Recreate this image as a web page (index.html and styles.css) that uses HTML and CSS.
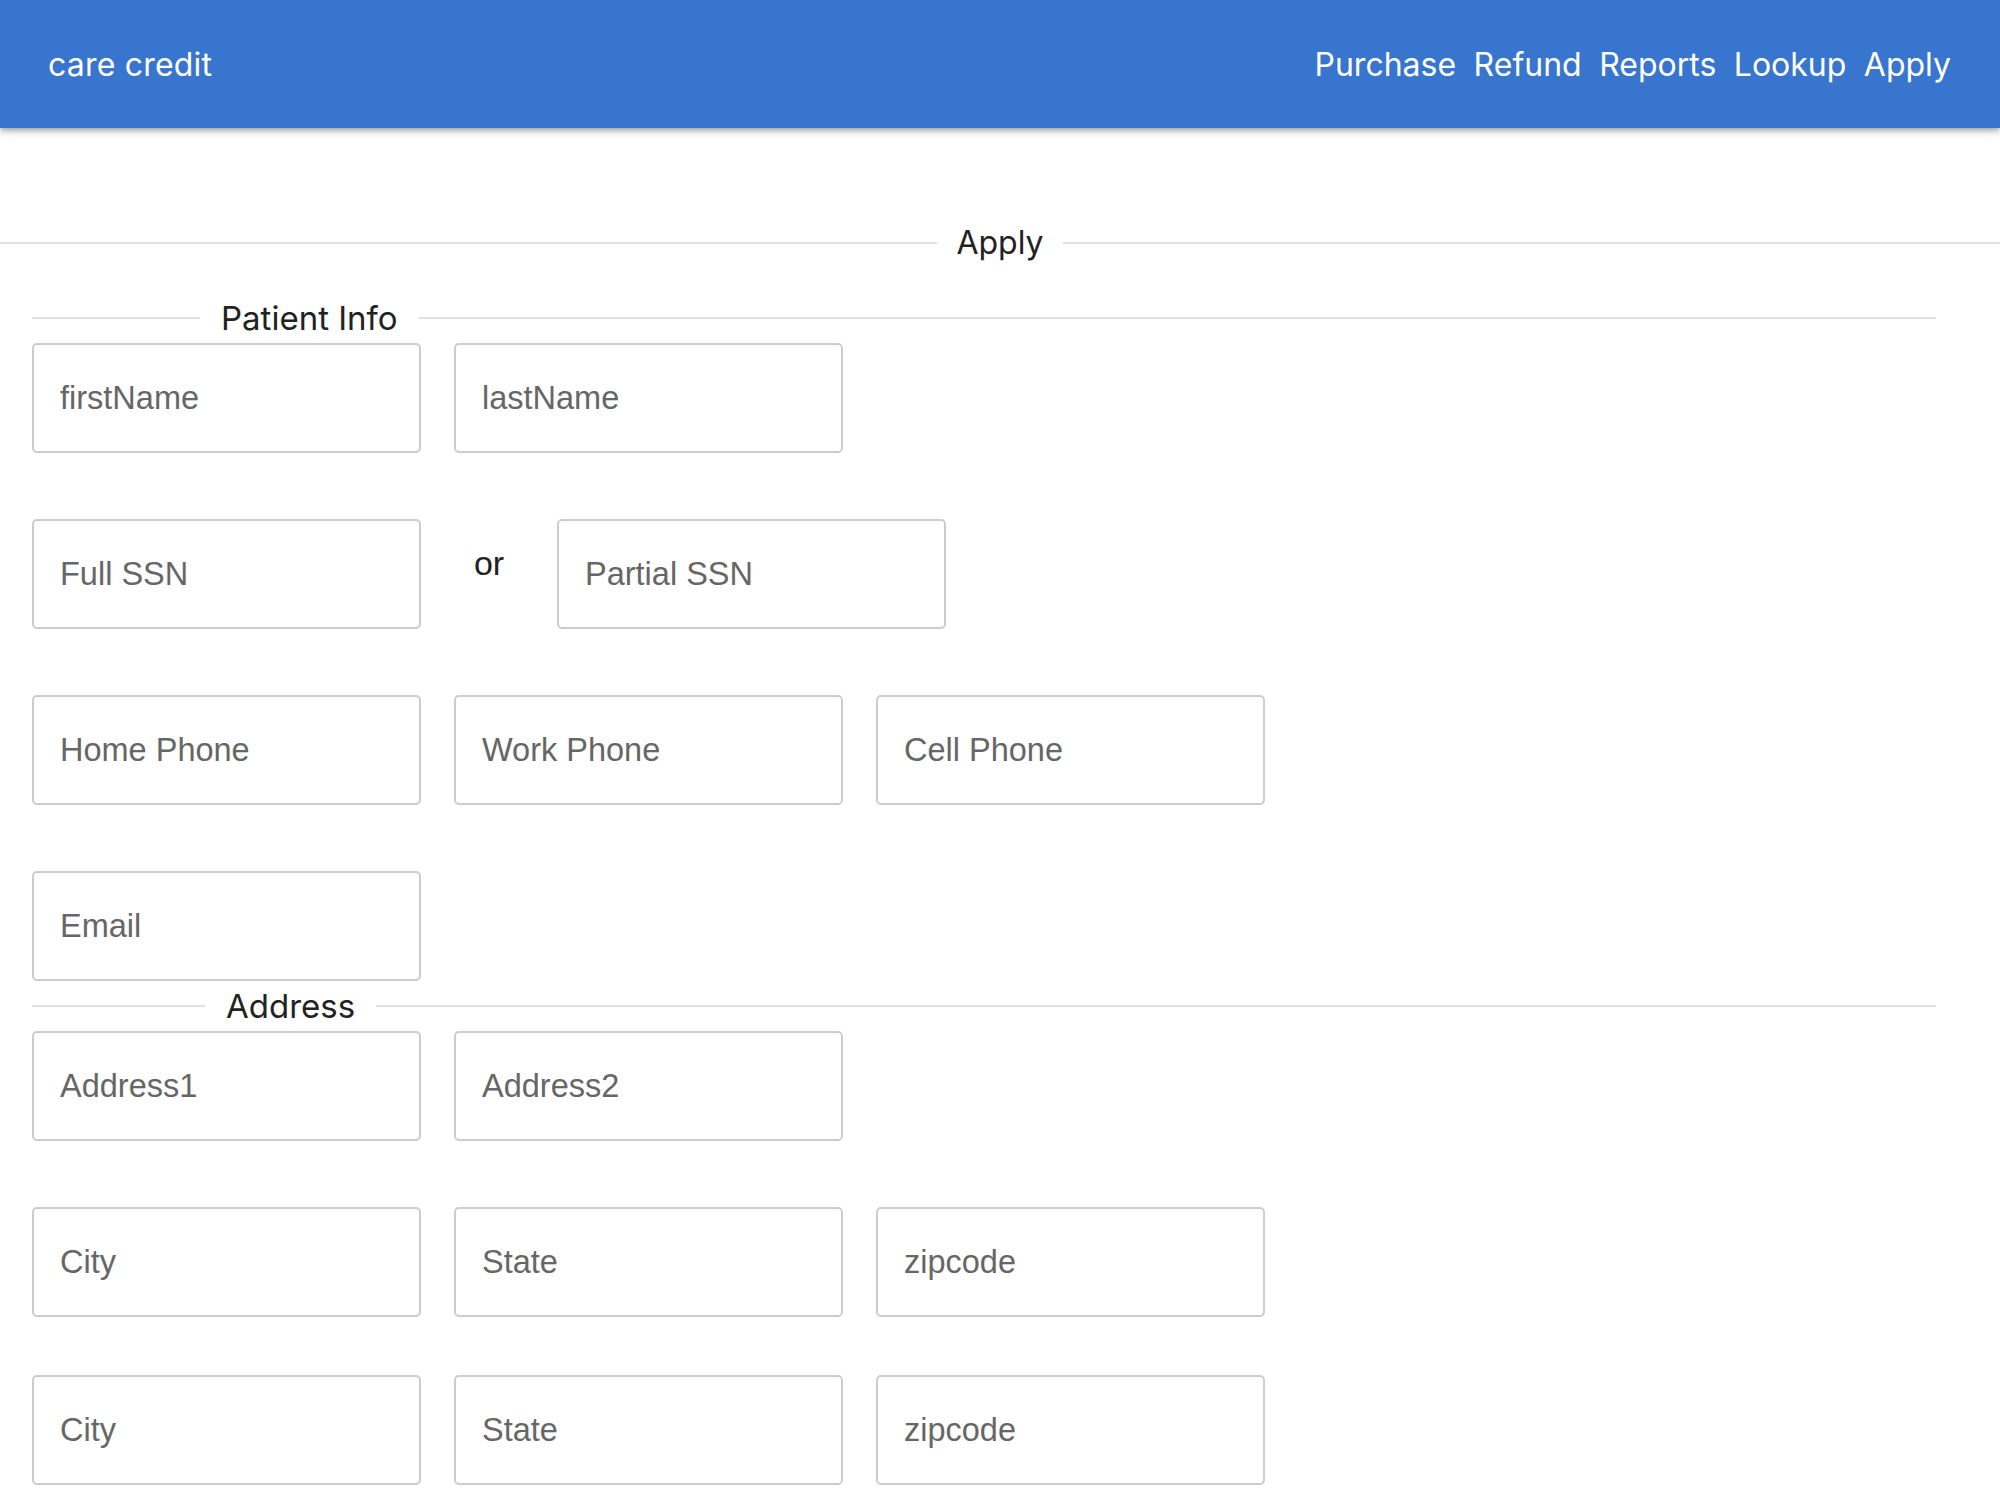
FILE: index.html
```html
<!DOCTYPE html>
<html lang="en">
<head>
<meta charset="utf-8">
<title>care credit - Apply</title>
<link rel="stylesheet" href="styles.css">
</head>
<body>
<header class="topbar">
  <div class="brand">care credit</div>
  <nav class="nav">
    <a class="nav-link" href="#">Purchase</a>
    <a class="nav-link" href="#">Refund</a>
    <a class="nav-link" href="#">Reports</a>
    <a class="nav-link" href="#">Lookup</a>
    <a class="nav-link" href="#">Apply</a>
  </nav>
</header>
<main class="page">
  <div class="page-title">
    <span class="rule"></span>
    <h1 class="title-text">Apply</h1>
    <span class="rule"></span>
  </div>

  <section class="group">
    <div class="legend legend-patient">
      <span class="rule-start"></span>
      <span class="legend-text">Patient Info</span>
      <span class="rule"></span>
    </div>
    <div class="rows">
      <div class="row">
        <input class="field" placeholder="firstName">
        <input class="field" placeholder="lastName">
      </div>
      <div class="row row-or">
        <input class="field" placeholder="Full SSN">
        <span class="or">or</span>
        <input class="field" placeholder="Partial SSN">
      </div>
      <div class="row">
        <input class="field" placeholder="Home Phone">
        <input class="field" placeholder="Work Phone">
        <input class="field" placeholder="Cell Phone">
      </div>
      <div class="row">
        <input class="field" placeholder="Email">
      </div>
    </div>
  </section>

  <section class="group">
    <div class="legend legend-address">
      <span class="rule-start"></span>
      <span class="legend-text">Address</span>
      <span class="rule"></span>
    </div>
    <div class="rows">
      <div class="row">
        <input class="field" placeholder="Address1">
        <input class="field" placeholder="Address2">
      </div>
      <div class="row">
        <input class="field" placeholder="City">
        <input class="field" placeholder="State">
        <input class="field" placeholder="zipcode">
      </div>
    </div>
    <div class="row row-extra">
      <input class="field" placeholder="City">
      <input class="field" placeholder="State">
      <input class="field" placeholder="zipcode">
    </div>
  </section>
</main>
</body>
</html>
```

FILE: styles.css
```css
html, body {
  margin: 0;
  padding: 0;
  background: #ffffff;
}

body {
  overflow: hidden;
  font-family: Inter, "Noto Sans", sans-serif;
  color: #222222;
}

.topbar {
  position: relative;
  z-index: 2;
  height: 128px;
  box-sizing: border-box;
  padding: 0 49px 0 48px;
  display: flex;
  align-items: center;
  justify-content: space-between;
  background: #3875ce;
  box-shadow: 0 2px 4px -1px rgba(0,0,0,0.2), 0 4px 6px rgba(0,0,0,0.16), 0 1px 12px rgba(0,0,0,0.12);
}

.brand {
  font-size: 32px;
  color: #ffffff;
  letter-spacing: 0.2px;
}

.nav {
  display: flex;
  gap: 17.5px;
}

.nav-link {
  font-size: 32px;
  color: #ffffff;
  text-decoration: none;
}

.page {
  padding-top: 95px;
}

.page-title {
  display: flex;
  align-items: center;
  height: 40px;
}

.title-text {
  margin: 0;
  padding: 0 19px;
  font-size: 32px;
  font-weight: 400;
  line-height: 40px;
  color: #222222;
}

.rule {
  flex: 1;
  height: 2px;
  background: #e0e0e0;
}

.rule-start {
  height: 2px;
  background: #e0e0e0;
}

.group {
  margin: 0 64px 0 32px;
}

.page-title + .group {
  margin-top: 30px;
}

.legend {
  display: flex;
  align-items: center;
  height: 50px;
}

.legend-patient .rule-start {
  width: 168px;
}

.legend-address .rule-start {
  width: 173px;
}

.legend-text {
  padding: 0 21px;
  font-size: 33px;
  line-height: 40px;
  color: #222222;
}

.rows {
  display: flex;
  flex-direction: column;
  gap: 66px;
}

.row {
  display: flex;
  gap: 33px;
}

.row-or {
  gap: 0;
}

.row-extra {
  margin-top: 58px;
}

.field {
  width: 389px;
  height: 110px;
  box-sizing: border-box;
  margin: 0;
  padding: 0 26px;
  border: 2px solid #cccccc;
  border-radius: 5px;
  background: #ffffff;
  font-family: "Liberation Sans", Arial, sans-serif;
  font-size: 32.5px;
  color: #333333;
  outline: none;
}

.field::placeholder {
  color: #666666;
  opacity: 1;
}

.or {
  width: 136px;
  margin-top: 24px;
  text-align: center;
  font-family: "Liberation Sans", Arial, sans-serif;
  font-size: 34px;
  line-height: 40px;
  color: #222222;
}
```
